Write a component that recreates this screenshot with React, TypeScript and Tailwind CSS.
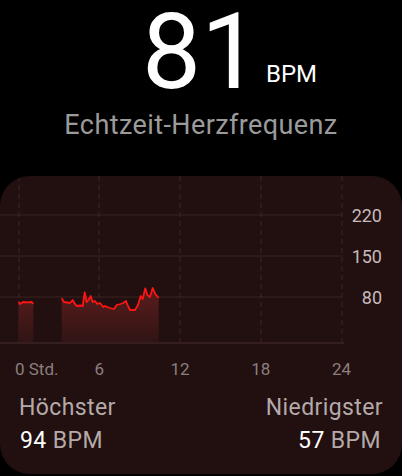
const seg1: [number, number][] = [
  [18.5, 125.7], [20, 128], [23, 126], [27, 126.3], [31.7, 126], [33.3, 128],
]

const seg2: [number, number][] = [
  [61.7, 122.3], [64, 126], [67, 126.5], [70, 127], [72.7, 124], [75, 128], [77, 130],
  [80, 129.5], [82.7, 130], [84.7, 116.3], [86.7, 126], [88.5, 124], [90.7, 120],
  [92.7, 126], [95, 125], [97.3, 128], [100, 127], [103.3, 131], [105, 130], [107.3, 131],
  [110, 132], [114, 133], [116.7, 129], [120.7, 128], [123.3, 127], [126, 125], [128, 130],
  [130, 134], [135, 134], [138, 129], [140.7, 120], [142.7, 123], [145.3, 112.3],
  [147.3, 119], [150, 121], [152.7, 112], [155.3, 118], [158.7, 122],
]

const toLine = (pts: [number, number][]) => pts.map(([x, y]) => `${x},${y}`).join(' ')
const toArea = (pts: [number, number][]) =>
  `${toLine(pts)} ${pts[pts.length - 1][0]},166 ${pts[0][0]},166`

const verticals = [19, 99, 180, 261, 342]
const horizontals = [39, 80, 121]

function HeartChart() {
  return (
    <svg width="344" height="168" viewBox="0 0 344 168" className="shrink-0">
      <defs>
        <linearGradient id="hrFill" x1="0" y1="110" x2="0" y2="166" gradientUnits="userSpaceOnUse">
          <stop offset="0" stopColor="#5c1d1d" />
          <stop offset="1" stopColor="#311414" />
        </linearGradient>
      </defs>
      {horizontals.map((y) => (
        <line key={y} x1="0" x2="342" y1={y} y2={y} stroke="#3b2525" strokeWidth="1" />
      ))}
      {verticals.map((x) => (
        <line key={x} x1={x} x2={x} y1="0" y2="167" stroke="#3b2626" strokeWidth="1" strokeDasharray="5 4" />
      ))}
      <line x1="0" x2="344" y1="167" y2="167" stroke="#3b2525" strokeWidth="1.5" />
      <polygon points={toArea(seg1)} fill="url(#hrFill)" />
      <polygon points={toArea(seg2)} fill="url(#hrFill)" />
      <polyline points={toLine(seg1)} fill="none" stroke="#ff1414" strokeWidth="1.8" strokeLinejoin="round" />
      <polyline points={toLine(seg2)} fill="none" stroke="#ff1414" strokeWidth="1.8" strokeLinejoin="round" />
    </svg>
  )
}

export default function App() {
  return (
    <div className="w-[402px] h-[476px] bg-black overflow-hidden font-['Roboto','Liberation_Sans',sans-serif]">
      <div className="grid grid-cols-[1fr_auto_1fr] items-end h-[105px]">
        <div />
        <span className="text-[105px] leading-[105px] text-white">81</span>
        <span className="text-[24px] leading-none text-white ml-[6px] mb-[19px]">BPM</span>
      </div>
      <p className="mt-[7px] text-[27px] leading-none tracking-[0.4px] text-center text-[#9b9b9b]">
        Echtzeit-Herzfrequenz
      </p>

      <div className="mt-[37px] h-[298px] rounded-[30px] bg-[#220f0f] overflow-hidden">
        <div className="flex h-[168px]">
          <HeartChart />
          <div className="flex-1 flex flex-col items-end pr-[20px] pt-[19px] text-[18px] text-[#c6bcbc]">
            <span className="h-[41px] leading-[41px]">220</span>
            <span className="h-[41px] leading-[41px]">150</span>
            <span className="h-[41px] leading-[41px]">80</span>
          </div>
        </div>

        <div className="flex mt-[17px] pl-[15px] text-[17px] leading-none text-[#8b7f7f]">
          <span className="w-[44px]">0 Std.</span>
          <span className="w-[80.75px] text-center">6</span>
          <span className="w-[80.75px] text-center">12</span>
          <span className="w-[80.75px] text-center">18</span>
          <span className="w-[80.75px] text-center">24</span>
        </div>

        <div className="flex justify-between mt-[18px] px-[19px] text-[23px] leading-none tracking-[0.4px] text-[#b4aaaa]">
          <div className="flex flex-col items-start">
            <span>Höchster</span>
            <span className="mt-[10px] pl-[1px]">
              <span className="text-white">94</span> BPM
            </span>
          </div>
          <div className="flex flex-col items-end">
            <span>Niedrigster</span>
            <span className="mt-[10px] pr-[2px]">
              <span className="text-white">57</span> BPM
            </span>
          </div>
        </div>
      </div>
    </div>
  )
}
